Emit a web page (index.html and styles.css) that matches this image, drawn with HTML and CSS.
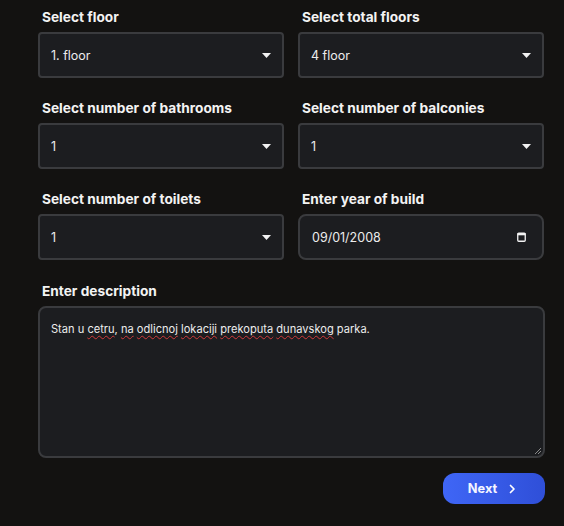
FILE: index.html
```html
<!DOCTYPE html>
<html>
<head>
<meta charset="utf-8">
<link rel="stylesheet" href="styles.css">
</head>
<body>
<form class="form">
  <div class="grid">
    <div class="field">
      <label class="label">Select floor</label>
      <div class="control select"><span>1. floor</span>
        <svg class="arrow" width="9" height="5" viewBox="0 0 9 5"><path d="M0 0h9L4.5 5z" fill="#f2f2f2"/></svg></div>
    </div>
    <div class="field">
      <label class="label">Select total floors</label>
      <div class="control select"><span>4 floor</span>
        <svg class="arrow" width="9" height="5" viewBox="0 0 9 5"><path d="M0 0h9L4.5 5z" fill="#f2f2f2"/></svg></div>
    </div>
    <div class="field">
      <label class="label">Select number of bathrooms</label>
      <div class="control select"><span>1</span>
        <svg class="arrow" width="9" height="5" viewBox="0 0 9 5"><path d="M0 0h9L4.5 5z" fill="#f2f2f2"/></svg></div>
    </div>
    <div class="field">
      <label class="label">Select number of balconies</label>
      <div class="control select"><span>1</span>
        <svg class="arrow" width="9" height="5" viewBox="0 0 9 5"><path d="M0 0h9L4.5 5z" fill="#f2f2f2"/></svg></div>
    </div>
    <div class="field">
      <label class="label">Select number of toilets</label>
      <div class="control select"><span>1</span>
        <svg class="arrow" width="9" height="5" viewBox="0 0 9 5"><path d="M0 0h9L4.5 5z" fill="#f2f2f2"/></svg></div>
    </div>
    <div class="field">
      <label class="label">Enter year of build</label>
      <div class="control date"><span>09/01/2008</span>
        <svg class="cal" width="9" height="10" viewBox="0 0 9 10"><rect x="0.75" y="1.25" width="7.5" height="8" rx="1" fill="none" stroke="#f2f2f2" stroke-width="1.3"/><rect x="0.5" y="1" width="8" height="2.3" fill="#f2f2f2"/></svg></div>
    </div>
  </div>
  <div class="field desc">
    <label class="label">Enter description</label>
    <div class="control area">Stan u <span class="sp">cetru</span>, <span class="sp">na</span> <span class="sp">odlicnoj</span> <span class="sp">lokaciji</span> <span class="sp">prekoputa</span> <span class="sp">dunavskog</span> parka.</div>
  </div>
  <div class="actions">
    <button type="button" class="next">Next
      <svg width="7" height="10" viewBox="0 0 7 10"><path d="M1.5 1.5l3.5 3.5L1.5 8.5" fill="none" stroke="#fff" stroke-width="1.7" stroke-linecap="round" stroke-linejoin="round"/></svg>
    </button>
  </div>
</form>
</body>
</html>
```
FILE: styles.css
```css
html, body {
  margin: 0;
  background: #131211;
}
body {
  font-family: Inter, "Noto Sans", sans-serif;
  color: #ececec;
  width: 564px;
  height: 526px;
  overflow: hidden;
}
.form {
  padding: 7px 19px 0 38px;
}
.grid {
  display: grid;
  grid-template-columns: 246px 246px;
  column-gap: 14px;
  row-gap: 20px;
}
.field {
  display: flex;
  flex-direction: column;
  gap: 4px;
}
.label {
  font-weight: 700;
  font-size: 13.7px;
  line-height: 21px;
  padding-left: 4px;
  color: #f3f3f3;
}
.control {
  box-sizing: border-box;
  height: 46px;
  background: #1c1d20;
  border: 2px solid #3a3b3e;
  border-radius: 4px;
  display: flex;
  align-items: center;
  justify-content: space-between;
  padding: 0 11px 0 11px;
  font-size: 12.5px;
  color: #ececec;
}
.date {
  border-radius: 8px;
  padding-left: 12px;
  padding-right: 16px;
}
.desc {
  margin-top: 21px;
}
.area {
  height: 152px;
  display: block;
  border-radius: 8px;
  padding: 12px 11px;
  font-size: 11.1px;
  line-height: 18px;
  position: relative;
}
.area::after {
  content: "";
  position: absolute;
  right: 2px;
  bottom: 2px;
  width: 6px;
  height: 6px;
  background: linear-gradient(135deg, transparent 45%, #8a8a8a 45%, #8a8a8a 55%, transparent 55%, transparent 70%, #8a8a8a 70%, #8a8a8a 82%, transparent 82%);
}
.sp {
  text-decoration: underline wavy #d23a3a;
  text-decoration-thickness: 1px;
  text-underline-offset: 2px;
}
.actions {
  display: flex;
  justify-content: flex-end;
  margin-top: 15px;
}
.next {
  width: 102px;
  height: 31px;
  border: none;
  border-radius: 12px;
  background: linear-gradient(90deg, #3f66f6, #2f4fd8);
  color: #f4f5ff;
  font-family: Inter, sans-serif;
  font-weight: 700;
  font-size: 12.8px;
  display: flex;
  align-items: center;
  justify-content: center;
  gap: 12px;
  padding: 0 4px 0 0;
}
```
